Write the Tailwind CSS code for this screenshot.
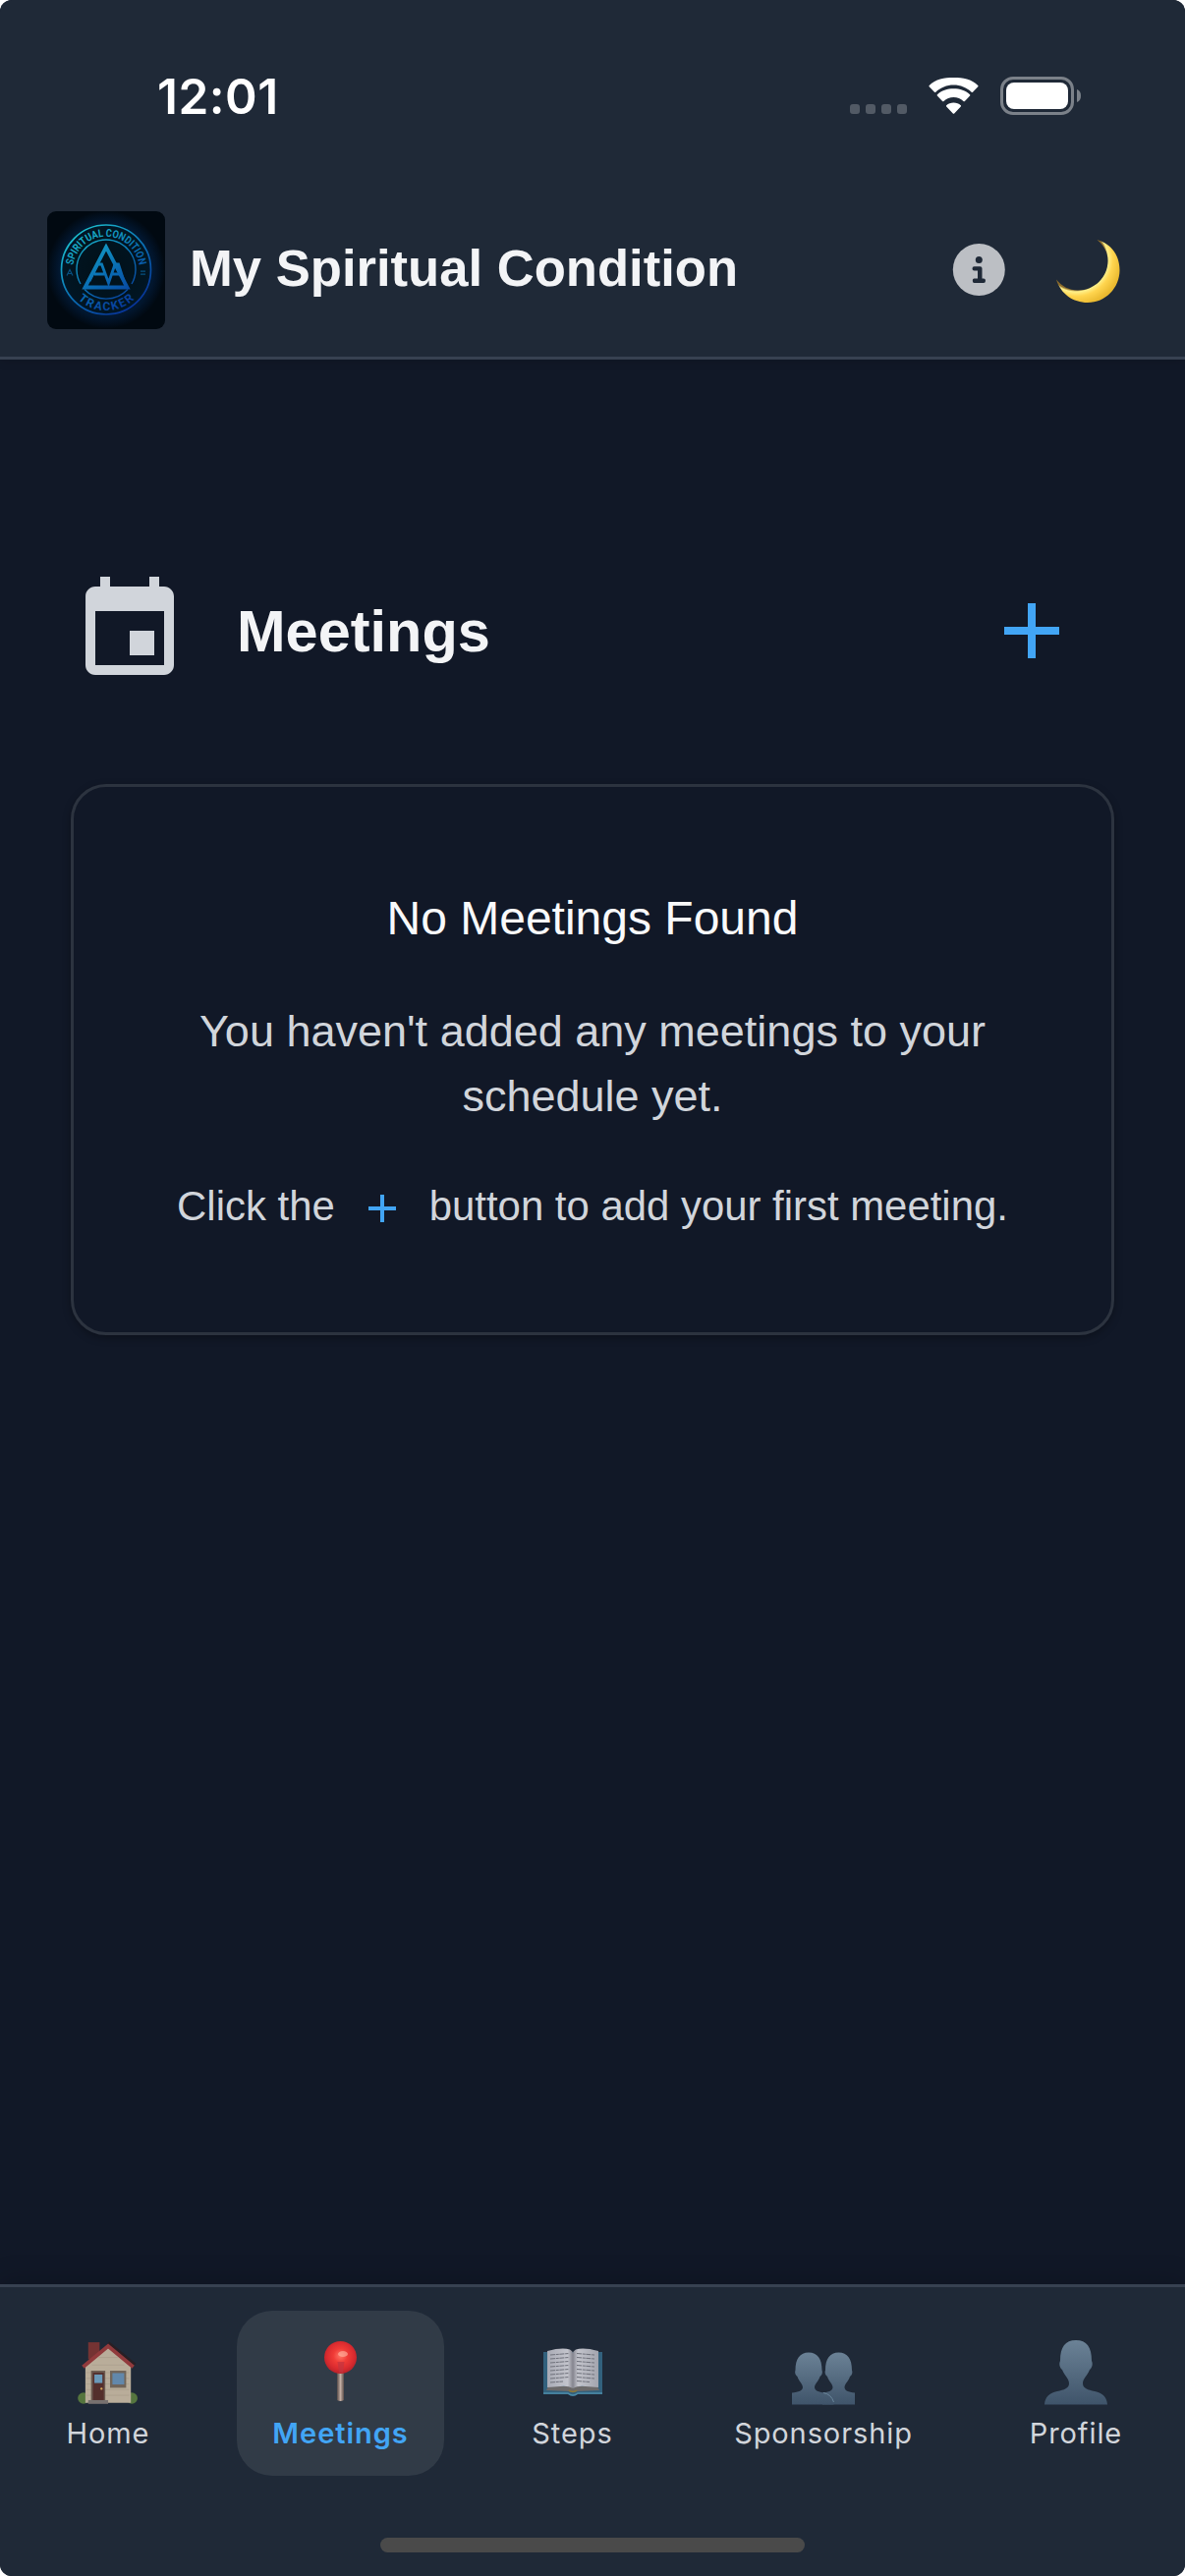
<!DOCTYPE html>
<html lang="en">
<head>
<meta charset="utf-8">
<title>My Spiritual Condition</title>
<script src="https://cdn.jsdelivr.net/npm/@tailwindcss/browser@4"></script>
</head>
<body class="bg-white">
<div class="w-[1206px] h-[2622px] rounded-[12px] overflow-hidden bg-[#111827] flex flex-col font-['Liberation_Sans',sans-serif]">

  <header class="relative z-10 h-[366px] shrink-0 bg-[#1f2937] border-b-3 border-[#374151] shadow-[0_3px_9px_rgba(0,0,0,0.1)] flex flex-col">
    <div class="h-[186px] pt-[67px] pl-[160px] pr-[106px] flex justify-between items-start">
      <div class="text-white font-['Inter',sans-serif] font-semibold text-[49.5px] leading-[62px] whitespace-nowrap tracking-[0.5px]">12:01</div>
      <div class="flex pt-[11px]">
        <svg class="w-[58px] h-[39px]" viewBox="0 0 58 39" fill="#525a65"><rect x="0" y="28" width="10" height="10" rx="3"/><rect x="16" y="28" width="10" height="10" rx="3"/><rect x="32" y="28" width="10" height="10" rx="3"/><rect x="48" y="28" width="10" height="10" rx="3"/></svg>
        <svg class="w-[51px] h-[39px] ml-[22px]" viewBox="0 0 51 39" fill="#fff"><path d="M25.5 8.6c7 0 13.400 2.700 18.200 7.100.4.400 1 .3 1.300 0l5.300-5.400c.4-.4.4-1 0-1.400C43.800 2.500 35 1 25.500 1S7.200 2.500.7 8.900c-.4.4-.4 1 0 1.400L6 15.700c.4.400 1 .400 1.300 0 4.800-4.400 11.200-7.100 18.200-7.100z"/><path d="M25.500 21.100c3.800 0 7.300 1.400 10 3.800.4.400 1 .300 1.400 0l5.200-5.300c.4-.400.4-1 0-1.400-4.300-4.100-10.200-5.900-16.600-5.900s-12.300 1.800-16.600 5.900c-.4.400-.4 1 0 1.400l5.200 5.300c.4.300 1 .4 1.400 0 2.700-2.400 6.200-3.800 10-3.800z"/><path d="M32.800 30.600c.4-.4.4-1 0-1.300-1.900-1.700-4.400-2.700-7.300-2.700s-5.400 1-7.300 2.700c-.4.300-.4.900 0 1.300l6.600 6.800c.4.400 1 .4 1.400 0z"/></svg>
        <svg class="w-[82px] h-[39px] ml-[22px]" viewBox="0 0 82 39"><rect x="1.500" y="1.500" width="72" height="36" rx="11.500" fill="none" stroke="#7b8189" stroke-width="3"/><rect x="6" y="6" width="63" height="27" rx="8" fill="#fff"/><path d="M78 13c3 1 4 3.500 4 6.500s-1 5.500-4 6.500z" fill="#7b8189"/></svg>
      </div>
    </div>
    <div class="h-[177px] pl-[48px] pr-[66px] flex items-center">
      <svg class="w-[120px] h-[120px] rounded-[9px]" viewBox="0 0 120 120">
        <defs>
          <radialGradient id="glow"><stop offset="0" stop-color="#011018"/><stop offset=".7" stop-color="#011522"/><stop offset=".8" stop-color="#021730"/><stop offset="1" stop-color="#010911"/></radialGradient>
          <linearGradient id="ring" gradientUnits="userSpaceOnUse" x1="30" y1="20" x2="88" y2="100"><stop offset="0" stop-color="#1cc0cf"/><stop offset=".5" stop-color="#0a72b5"/><stop offset="1" stop-color="#073096"/></linearGradient>
          <path id="arcTop" d="M26.200 63.500A34 34 0 1 1 93.800 63.500"/>
          <path id="arcBot" d="M18.500 59.500A41.500 41.500 0 0 0 101.500 59.500"/>
        </defs>
        <rect width="120" height="120" fill="#010911"/>
        <circle cx="60" cy="59.500" r="60" fill="url(#glow)"/>
        <g fill="none" stroke="url(#ring)">
          <circle cx="60" cy="59.500" r="45.500" stroke-width="1.700"/>
          <path d="M34 74A30 30 0 1 1 86 74M38 79.500A30 30 0 0 0 82 79.500" stroke-width="1.400"/>
          <path d="M60 36.500L38.500 77.500H81.500Z" stroke-width="3.800"/>
          <path d="M43 71L51.500 54H55.500L62.500 73L69 54H72.500L79 74M48 64H58M66.500 64H75.500" stroke-width="2.800"/>
        </g>
        <g fill="url(#ring)" class="font-['Roboto',sans-serif] font-bold">
          <text font-size="11"><textPath href="#arcTop" startOffset="50%" text-anchor="middle" textLength="97" lengthAdjust="spacingAndGlyphs">SPIRITUAL CONDITION</textPath></text>
          <text font-size="12"><textPath href="#arcBot" startOffset="50%" text-anchor="middle" textLength="63">TRACKER</textPath></text>
        </g>
        <path d="M20 65.500L23 59.500L26 65.500M21 63.500H25M95 61.200H100M95 64.200H100" fill="none" stroke="#075080" stroke-width="1.200"/>
      </svg>
      <h1 class="-mt-[3px] ml-[25px] text-[52.600px] leading-[66px] font-bold text-[#f3f4f6] whitespace-nowrap">My Spiritual Condition</h1>
      <svg class="w-[54px] h-[54px] ml-auto" viewBox="0 0 54 54"><circle cx="27.300" cy="26.500" r="26.500" fill="#bcbfc4"/><g fill="#1f2937"><circle cx="27.300" cy="16.500" r="3.500"/><path d="M22.500 23.200H28.500Q30.500 23.200 30.500 25.200V35.500H32Q34 35.500 34 37.700T32 40H22.500Q20.800 40 20.800 37.700T22.500 35.500H26V27.500H22.500Q20.500 27.500 20.500 25.400T22.500 23.200Z"/></g></svg>
      <svg class="w-[66px] h-[66px] ml-[51px]" viewBox="0 0 66 66"><defs><radialGradient id="moon" gradientUnits="userSpaceOnUse" cx="21" cy="22" r="47"><stop offset=".66" stop-color="#8a6a2a"/><stop offset=".7" stop-color="#fff08a"/><stop offset=".8" stop-color="#ffd54f"/><stop offset="1" stop-color="#eab92f"/></radialGradient></defs><path d="M42.500 2C57 6 65.500 18 65.500 33C65.500 51 51 66 33 66C18 66 5.500 57 1 42.500C7 49.500 14 53.500 23 53.500C40 53.500 53.500 40 53.500 23.500C53.500 14.500 49.500 8 42.500 2Z" fill="url(#moon)"/></svg>
    </div>
  </header>

  <main class="flex-1 pt-[204px] px-[72px]">
    <div class="h-[144px] flex items-center">
      <svg class="w-[120px] h-[120px]" viewBox="0 0 24 24" fill="#d1d5db"><path d="M17 12h-5v5h5v-5zM16 1v2H8V1H6v2H5c-1.110 0-1.990.9-1.990 2L3 19c0 1.100.89 2 2 2h14c1.100 0 2-.9 2-2V5c0-1.100-.9-2-2-2h-1V1h-2zm3 18H5V8h14v11z"/></svg>
      <h2 class="mt-[2px] ml-[49px] text-[59.500px] leading-[72px] font-bold text-[#f3f4f6]">Meetings</h2>
      <svg class="w-[56px] h-[56px] ml-auto mr-[56px]" viewBox="0 0 56 56" fill="#42a5f5"><path d="M24 0h8v24h24v8H32v24h-8V32H0v-8h24z"/></svg>
    </div>
    <section class="mt-[84px] h-[561px] rounded-[36px] border-3 border-[#2c333f] shadow-[0_3px_9px_rgba(0,0,0,0.3)] pt-[104px] flex flex-col items-center text-center whitespace-nowrap">
      <h3 class="text-[48px] leading-[60px] text-[#f9fafb]">No Meetings Found</h3>
      <p class="mt-[52px] text-[45px] leading-[66px] text-[#d1d5db]">You haven't added any meetings to your<br>schedule yet.</p>
      <div class="mt-[47px] flex items-center text-[41.900px] leading-[63px] text-[#d1d5db]">
        <span>Click the</span>
        <svg class="w-[28px] h-[28px] mx-[34px] mt-[4px]" viewBox="0 0 28 28" fill="#42a5f5"><path d="M12 0h4v12h12v4H16v12h-4V16H0v-4h12z"/></svg>
        <span>button to add your first meeting.</span>
      </div>
    </section>
  </main>

  <nav class="relative h-[297px] shrink-0 bg-[#1f2937] border-t-3 border-[#374151] shadow-[0_-6px_24px_rgba(0,0,0,0.15)] pt-[24px] flex flex-col items-center font-['Inter',sans-serif] text-[29px] leading-[36px] tracking-[0.9px] text-[#d1d5db]">
    <div class="w-full pl-[33px] flex">
      <a class="w-[154px] h-[168px] pt-[26px] flex flex-col items-center">
        <svg class="w-[66px] h-[72px]" viewBox="0 0 66 72"><g transform="translate(1.200 .3) scale(.965)">
          <circle cx="7" cy="65" r="6" fill="#55753e"/><circle cx="58" cy="65" r="6" fill="#55753e"/>
          <path d="M12 6h12v18H12z" fill="#743333"/>
          <path d="M9 30L33 9L57 30V70H9z" fill="#b9ad9a"/>
          <path d="M10 38H55M10 44H55M10 50H55M10 56H55M10 62H55M16 30H50M23 22H43" stroke="#a99d8b" stroke-width=".7"/>
          <path d="M33 7L61 30" stroke="#291f24" stroke-width="4"/>
          <path d="M6.500 32L33 10L59.500 32" fill="none" stroke="#913a3c" stroke-width="4"/>
          <path d="M15 36h15v32H15z" fill="#6b5a50"/><path d="M17 38h11.500v30H17z" fill="#542f2c"/><path d="M18.500 40h8.500v9H18.500z" fill="#6b9aba"/><circle cx="26" cy="55" r="1.200" fill="#d9a95c"/>
          <path d="M35 36h17v18H35z" fill="#716559"/><path d="M37.500 38.500h12.500v12H37.500z" fill="#6288ab"/>
          <path d="M12 67h21v4H12z" fill="#77716f"/></g>
        </svg>
        <span class="mt-[9px]">Home</span>
      </a>
      <a class="ml-[54px] w-[211px] h-[168px] pt-[26px] rounded-[36px] bg-[#313b47] flex flex-col items-center text-[#42a5f5] font-semibold tracking-[0.95px]">
        <svg class="w-[66px] h-[72px]" viewBox="0 0 66 72">
          <defs><radialGradient id="ball" cx=".5" cy=".45" r=".55"><stop offset="0" stop-color="#ff7565"/><stop offset=".4" stop-color="#f03b36"/><stop offset=".75" stop-color="#da2b2f"/><stop offset="1" stop-color="#b9222a"/></radialGradient><linearGradient id="pin"><stop offset="0" stop-color="#564b48"/><stop offset=".5" stop-color="#c3ada2"/><stop offset="1" stop-color="#5c4f4b"/></linearGradient></defs>
          <path d="M29 34h7v31q-3.500 2-7 0z" fill="url(#pin)"/>
          <circle cx="32.500" cy="21.500" r="16.500" fill="url(#ball)"/>
          <path d="M29.500 26h7l-1.500 11h-4z" fill="#c23540" opacity=".7"/><ellipse cx="35" cy="18" rx="5" ry="3" fill="#ffb9a5" opacity=".6"/>
        </svg>
        <span class="mt-[9px]">Meetings</span>
      </a>
      <a class="ml-[54px] w-[153px] h-[168px] pt-[26px] flex flex-col items-center">
        <svg class="w-[66px] h-[72px]" viewBox="0 0 66 72">
          <defs><linearGradient id="pageL"><stop offset="0" stop-color="#a9abb5"/><stop offset=".8" stop-color="#c3c4cc"/><stop offset="1" stop-color="#85858f"/></linearGradient><linearGradient id="pageR"><stop offset="0" stop-color="#85858f"/><stop offset=".2" stop-color="#c3c4cc"/><stop offset="1" stop-color="#a3a5ae"/></linearGradient></defs>
          <path d="M3 16h60v43H38q-5 4-10 0H3z" fill="#32617d"/><path d="M3 58h25q5 4 10 0h25" fill="none" stroke="#4c8ba8" stroke-width="1.500"/>
          <path d="M6 55l2-4h50l2 4-22 1q-5 2-10 0z" fill="#6c6a6a"/>
          <path d="M7 15Q22 11 30 13.500Q33 15 33 17V53Q28 50 20 51L7 52z" fill="url(#pageL)"/>
          <path d="M59 15Q44 11 36 13.500Q33 15 33 17V53Q38 50 46 51L59 52z" fill="url(#pageR)"/>
          <path d="M10 19l19-1.500M10 23l19-1.500M10 27l19-1.500M10 31l19-1.500M10 35l19-1.500M10 39l19-1.500M10 43l19-1.500M10 47l13-1M37 17.500l18 1.500M37 21.500l18 1.500M37 25.500l18 1.500M37 29.500l18 1.500M37 33.500l18 1.500M37 37.500l18 1.500M37 41.500l18 1.500M37 45.500l13 1" stroke="#6f717b" stroke-width="1" stroke-dasharray="5 .8 3 .6"/>
          <path d="M29 55q4 3 8 0" stroke="#8b7937" stroke-width="1.500" fill="none"/>
        </svg>
        <span class="mt-[9px]">Steps</span>
      </a>
      <a class="ml-[53px] w-[252px] h-[168px] pt-[26px] flex flex-col items-center">
        <svg class="w-[66px] h-[72px]" viewBox="0 0 66 72">
          <defs><linearGradient id="bust" x2="0" y2="1"><stop offset="0" stop-color="#6b8296"/><stop offset="1" stop-color="#3f546a"/></linearGradient></defs>
          <path d="M32 57.500C39 57 42.500 55 42.500 52C42.500 48.500 38.500 46 37 41C35 39.500 34 37 35 34.500C35 23 39.500 16.500 48.500 16.500S62 23 62 34.500C63 37 62 39.500 60 41C58.500 46 54.500 48.500 54.500 52C54.500 55 58 57 65 57.500V69.500H32z" fill="url(#bust)"/>
          <path d="M1 57.500C8 57 12 55 12 52C12 48.500 8 46 6.500 41C4.500 39.500 3.500 37 4.500 34.500C4.500 23 9 16.500 18 16.500S31.500 23 31.500 34.500C32.500 37 31.500 39.500 29.500 41C28 46 24 48.500 24 52C24 55 28 57 34 57.500C40 59 43 63 43.500 69.500H1z" fill="url(#bust)"/>
          <path d="M33 57.500Q41 59 43.500 67" stroke="#69859a" fill="none"/>
        </svg>
        <span class="mt-[9px]">Sponsorship</span>
      </a>
      <a class="ml-[50px] w-[162px] h-[168px] pt-[26px] flex flex-col items-center">
        <svg class="w-[66px] h-[72px]" viewBox="0 0 66 72"><path d="M1 69.500C1.500 62 6 57.500 14 56C21 54.500 26 53 26 48C26 43 22 41 19 34C16.500 32 15.500 28 17 25C17 11 22 4 33 4S49 11 49 25C50.500 28 49.500 32 47 34C44 41 40 43 40 48C40 53 45 54.500 52 56C60 57.500 64.500 62 65 69.500z" fill="url(#bust)"/></svg>
        <span class="mt-[9px]">Profile</span>
      </a>
    </div>
    <div class="mt-[63px] w-[432px] h-[15px] rounded-full bg-[#4a4a4a]"></div>
  </nav>
</div>
</body>
</html>
